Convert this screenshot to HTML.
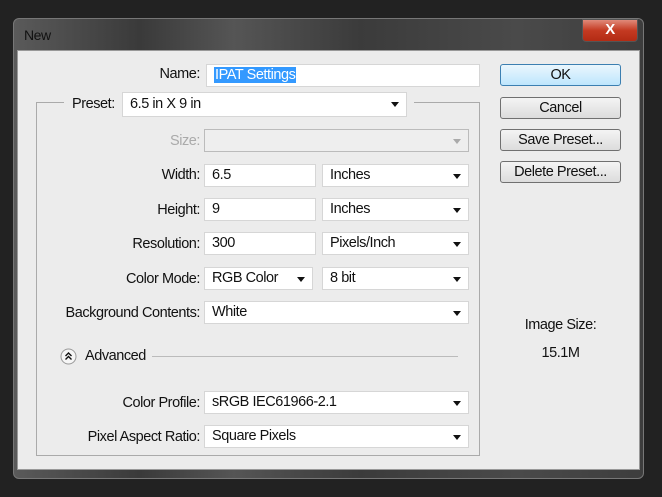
<!DOCTYPE html><html><head><style>
body{margin:0;width:662px;height:497px;background:#222;position:relative;overflow:hidden;font-family:"Liberation Sans",sans-serif;font-size:14.5px;letter-spacing:-0.45px;color:#111}
.a{position:absolute}
.win{left:13px;top:18px;width:631px;height:461px;border-radius:6px;background:linear-gradient(90deg,#5a5a5a,#3a3a3a 20%,#555 35%,#3b3b3b 55%,#4a4a4a 80%,#3d3d3d);border:1px solid #777;box-sizing:border-box}
.pan{left:17px;top:50px;width:623px;height:420px;background:#ececec;border:1px solid #999;box-sizing:border-box}
.in{background:#fff;border:1px solid #d6d6d6;box-sizing:border-box;padding-left:7px;line-height:21px;white-space:nowrap}
.lb{text-align:right;width:200px;left:0}
.dd::after{content:"";position:absolute;right:7px;top:9px;border-left:4px solid transparent;border-right:4px solid transparent;border-top:5px solid #111}
.bt{left:500px;width:121px;height:22px;border:1px solid #707070;border-radius:3px;background:linear-gradient(#f4f4f4,#dcdcdc);text-align:center;line-height:20px;box-sizing:border-box}
</style></head><body>
<div class="a win"></div>
<div class="a" style="left:24px;top:27px;color:#111;font-size:14px">New</div>
<div class="a" style="left:582px;top:19px;width:56px;height:23px;border-radius:0 0 4px 4px;background:linear-gradient(#e08a7a,#c43a22 50%,#b32b14);border:1px solid #555;box-sizing:border-box;color:#fff;text-align:center;font-weight:bold;line-height:20px;font-size:15px">X</div>
<div class="a pan"></div>
<div class="a" style="left:36px;top:102px;width:444px;height:354px;border:1px solid #aaa;box-sizing:border-box"></div>
<div class="a lb" style="top:66px">Name:</div>
<div class="a in" style="left:206px;top:64px;width:274px;height:23px"><span style="background:#3399ff;color:#fff;padding:0 1px">IPAT Settings</span></div>
<div class="a bt" style="top:64px;border-color:#3c7fb1;background:linear-gradient(#eaf6fd,#bee6fd)">OK</div>
<div class="a bt" style="top:97px">Cancel</div>
<div class="a bt" style="top:129px">Save Preset...</div>
<div class="a bt" style="top:161px">Delete Preset...</div>
<div class="a" style="left:64px;top:92px;width:350px;height:26px;background:#ececec"></div>
<div class="a" style="left:72px;top:96px">Preset:</div>
<div class="a in dd" style="left:122px;top:92px;width:285px;height:25px;line-height:23px">6.5 in X 9 in</div>
<div class="a lb" style="top:133px;color:#aaa">Size:</div>
<div class="a in" style="left:204px;top:129px;width:265px;height:23px;background:#eee;border-color:#bbb"><span class="a" style="right:7px;top:9px;border-left:4px solid transparent;border-right:4px solid transparent;border-top:5px solid #aaa"></span></div>
<div class="a lb" style="top:167px">Width:</div>
<div class="a in" style="left:204px;top:164px;width:112px;height:23px">6.5</div>
<div class="a in dd" style="left:322px;top:164px;width:147px;height:23px">Inches</div>
<div class="a lb" style="top:202px">Height:</div>
<div class="a in" style="left:204px;top:198px;width:112px;height:23px">9</div>
<div class="a in dd" style="left:322px;top:198px;width:147px;height:23px">Inches</div>
<div class="a lb" style="top:236px">Resolution:</div>
<div class="a in" style="left:204px;top:232px;width:112px;height:23px">300</div>
<div class="a in dd" style="left:322px;top:232px;width:147px;height:23px">Pixels/Inch</div>
<div class="a lb" style="top:271px">Color Mode:</div>
<div class="a in dd" style="left:204px;top:267px;width:109px;height:23px">RGB Color</div>
<div class="a in dd" style="left:322px;top:267px;width:147px;height:23px">8 bit</div>
<div class="a lb" style="top:305px">Background Contents:</div>
<div class="a in dd" style="left:204px;top:301px;width:265px;height:23px">White</div>
<svg class="a" style="left:60px;top:348px" width="17" height="17"><circle cx="8.5" cy="8.5" r="7.5" fill="#f6f6f6" stroke="#999"/><path d="M5.5 8 L8.5 5 L11.5 8 M5.5 11.5 L8.5 8.5 L11.5 11.5" fill="none" stroke="#111" stroke-width="1.4"/></svg>
<div class="a" style="left:85px;top:348px">Advanced</div>
<div class="a" style="left:152px;top:356px;width:306px;height:1px;background:#bbb"></div>
<div class="a lb" style="top:395px">Color Profile:</div>
<div class="a in dd" style="left:204px;top:391px;width:265px;height:23px">sRGB IEC61966-2.1</div>
<div class="a lb" style="top:429px">Pixel Aspect Ratio:</div>
<div class="a in dd" style="left:204px;top:425px;width:265px;height:23px">Square Pixels</div>
<div class="a" style="left:500px;top:317px;width:121px;text-align:center">Image Size:</div>
<div class="a" style="left:500px;top:345px;width:121px;text-align:center">15.1M</div>
</body></html>
